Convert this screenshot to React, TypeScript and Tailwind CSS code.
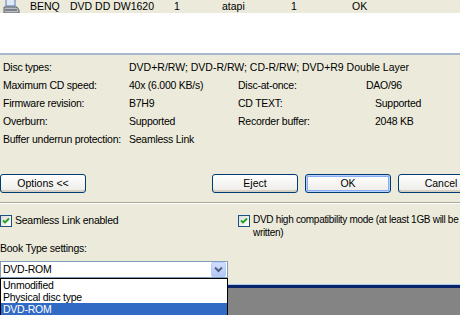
import React from 'react';

const font = { fontFamily: '"Liberation Sans", Arial, sans-serif' };

function XpButton({ label, w, isDefault = false }: { label: string; w: string; isDefault?: boolean }) {
  return (
    <div
      className={`${w} h-[19px] shrink-0 rounded-[3px] border border-[#003c74] bg-gradient-to-b from-white to-[#ecebe6] flex items-center justify-center text-[10.5px] text-black ${
        isDefault ? 'shadow-[inset_0_0_0_1px_#b9d1f8,inset_0_0_0_2px_#89adf4]' : 'shadow-[inset_0_-2px_0_#d6d0c5]'
      }`}
    >
      {label}
    </div>
  );
}

function XpCheck() {
  return (
    <div className="w-[12px] h-[12px] shrink-0 border border-[#1c5180] bg-gradient-to-br from-[#dcdcd7] to-white flex items-center justify-center">
      <svg width="8" height="8" viewBox="0 0 8 8">
        <path d="M1 3.5 L3 5.5 L7 1.5" stroke="#21a121" strokeWidth="1.8" fill="none" />
      </svg>
    </div>
  );
}

function DriveIcon() {
  return (
    <svg width="18" height="14" viewBox="0 0 18 14">
      <rect x="4" y="-3" width="9" height="9" fill="#dfe8f5" stroke="#5a7bb5" />
      <path d="M2 7 L15 7 L17 10 L17 13 L2 13 Z" fill="#b8bcc4" stroke="#5c6068" strokeWidth="1" />
      <rect x="3" y="9" width="12" height="2" fill="#7d818a" />
    </svg>
  );
}

const rows: [string, string, string?, string?][] = [
  ['Maximum CD speed:', '40x (6.000 KB/s)', 'Disc-at-once:', 'DAO/96'],
  ['Firmware revision:', 'B7H9', 'CD TEXT:', 'Supported'],
  ['Overburn:', 'Supported', 'Recorder buffer:', '2048 KB'],
  ['Buffer underrun protection:', 'Seamless Link'],
];

export default function App() {
  return (
    <div
      className="w-[460px] h-[315px] overflow-hidden bg-[#ecebdb] text-[10.5px] tracking-[-0.25px] text-black flex flex-col"
      style={font}
    >
      {/* device list */}
      <div className="h-[13px] bg-[#ecebdb] flex items-center whitespace-nowrap tracking-normal">
        <div className="w-[30px] shrink-0 pl-[2px] h-[13px] overflow-hidden flex items-start">
          <DriveIcon />
        </div>
        <span className="w-[40px] shrink-0">BENQ</span>
        <span className="w-[104px] shrink-0">DVD DD DW1620</span>
        <span className="w-[48px] shrink-0">1</span>
        <span className="w-[69px] shrink-0">atapi</span>
        <span className="w-[61px] shrink-0">1</span>
        <span>OK</span>
      </div>
      <div className="h-[40px] bg-white" />
      <div className="h-[2px] bg-[#a7b8cc]" />

      {/* properties */}
      <div className="pt-[4px] pl-[3px] flex flex-col">
        <div className="h-[18px] flex items-center whitespace-nowrap">
          <span className="w-[126px] shrink-0">Disc types:</span>
          <span className="tracking-normal">DVD+R/RW; DVD-R/RW; CD-R/RW; DVD+R9 Double Layer</span>
        </div>
        {rows.map(([a, b, c, d]) => (
          <div key={a} className="h-[18px] flex items-center whitespace-nowrap">
            <span className="w-[126px] shrink-0">{a}</span>
            <span className="w-[109px] shrink-0">{b}</span>
            {c && <span className={d === 'DAO/96' ? 'w-[128px] shrink-0' : 'w-[137px] shrink-0'}>{c}</span>}
            {d && <span>{d}</span>}
          </div>
        ))}
      </div>

      {/* buttons */}
      <div className="mt-[25px] flex items-center tracking-normal">
        <XpButton label="Options <<" w="w-[86px]" />
        <div className="w-[126px] shrink-0" />
        <XpButton label="Eject" w="w-[86px]" />
        <div className="w-[7px] shrink-0" />
        <XpButton label="OK" w="w-[86px]" isDefault />
        <div className="w-[7px] shrink-0" />
        <XpButton label="Cancel" w="w-[86px]" />
      </div>
      <div className="mt-[9px] h-[2px] border-t border-[#aca899] border-b border-b-white" />

      {/* options */}
      <div className="mt-[9px] flex items-start">
        <div className="w-[238px] shrink-0 flex items-center gap-[3px]">
          <XpCheck />
          <span>Seamless Link enabled</span>
        </div>
        <div className="flex items-start gap-[3px] shrink-0">
          <div className="mt-[2px]">
            <XpCheck />
          </div>
          <span className="text-[10px] tracking-[-0.3px] leading-[13px] whitespace-nowrap">
            DVD high compatibility mode (at least 1GB will be
            <br />
            written)
          </span>
        </div>
      </div>

      <div className="flex flex-1 mt-[3px]">
        <div className="w-[228px] shrink-0 flex flex-col">
          <div className="h-[13px] flex items-center">Book Type settings:</div>
          <div className="mt-[6px] h-[17px] border border-[#7f9db9] bg-white flex items-center">
            <span className="flex-1 pl-[2px]">DVD-ROM</span>
            <div className="w-[15px] h-[15px] mr-[1px] rounded-[2px] bg-gradient-to-b from-[#d2defc] to-[#b4c8f6] border border-[#b7cdf9] flex items-center justify-center">
              <svg width="9" height="7" viewBox="0 0 9 7">
                <path d="M1 1.5 L4.5 5 L8 1.5" stroke="#4d6185" strokeWidth="2" fill="none" />
              </svg>
            </div>
          </div>
          <div className="flex-1 border border-black border-b-0 bg-white flex flex-col leading-[12px]">
            <div className="h-[12px] pl-[2px]">Unmodified</div>
            <div className="h-[12px] pl-[2px]">Physical disc type</div>
            <div className="flex-1 pl-[2px] bg-[#316ac5] text-white">DVD-ROM</div>
          </div>
        </div>
        <div className="flex-1 flex flex-col">
          <div className="h-[42px]" />
          <div className="h-[1px] bg-[#a6caf0]" />
          <div className="h-[3px] bg-[#0a246a]" />
          <div className="flex-1 bg-[#848484]" />
        </div>
      </div>
    </div>
  );
}
